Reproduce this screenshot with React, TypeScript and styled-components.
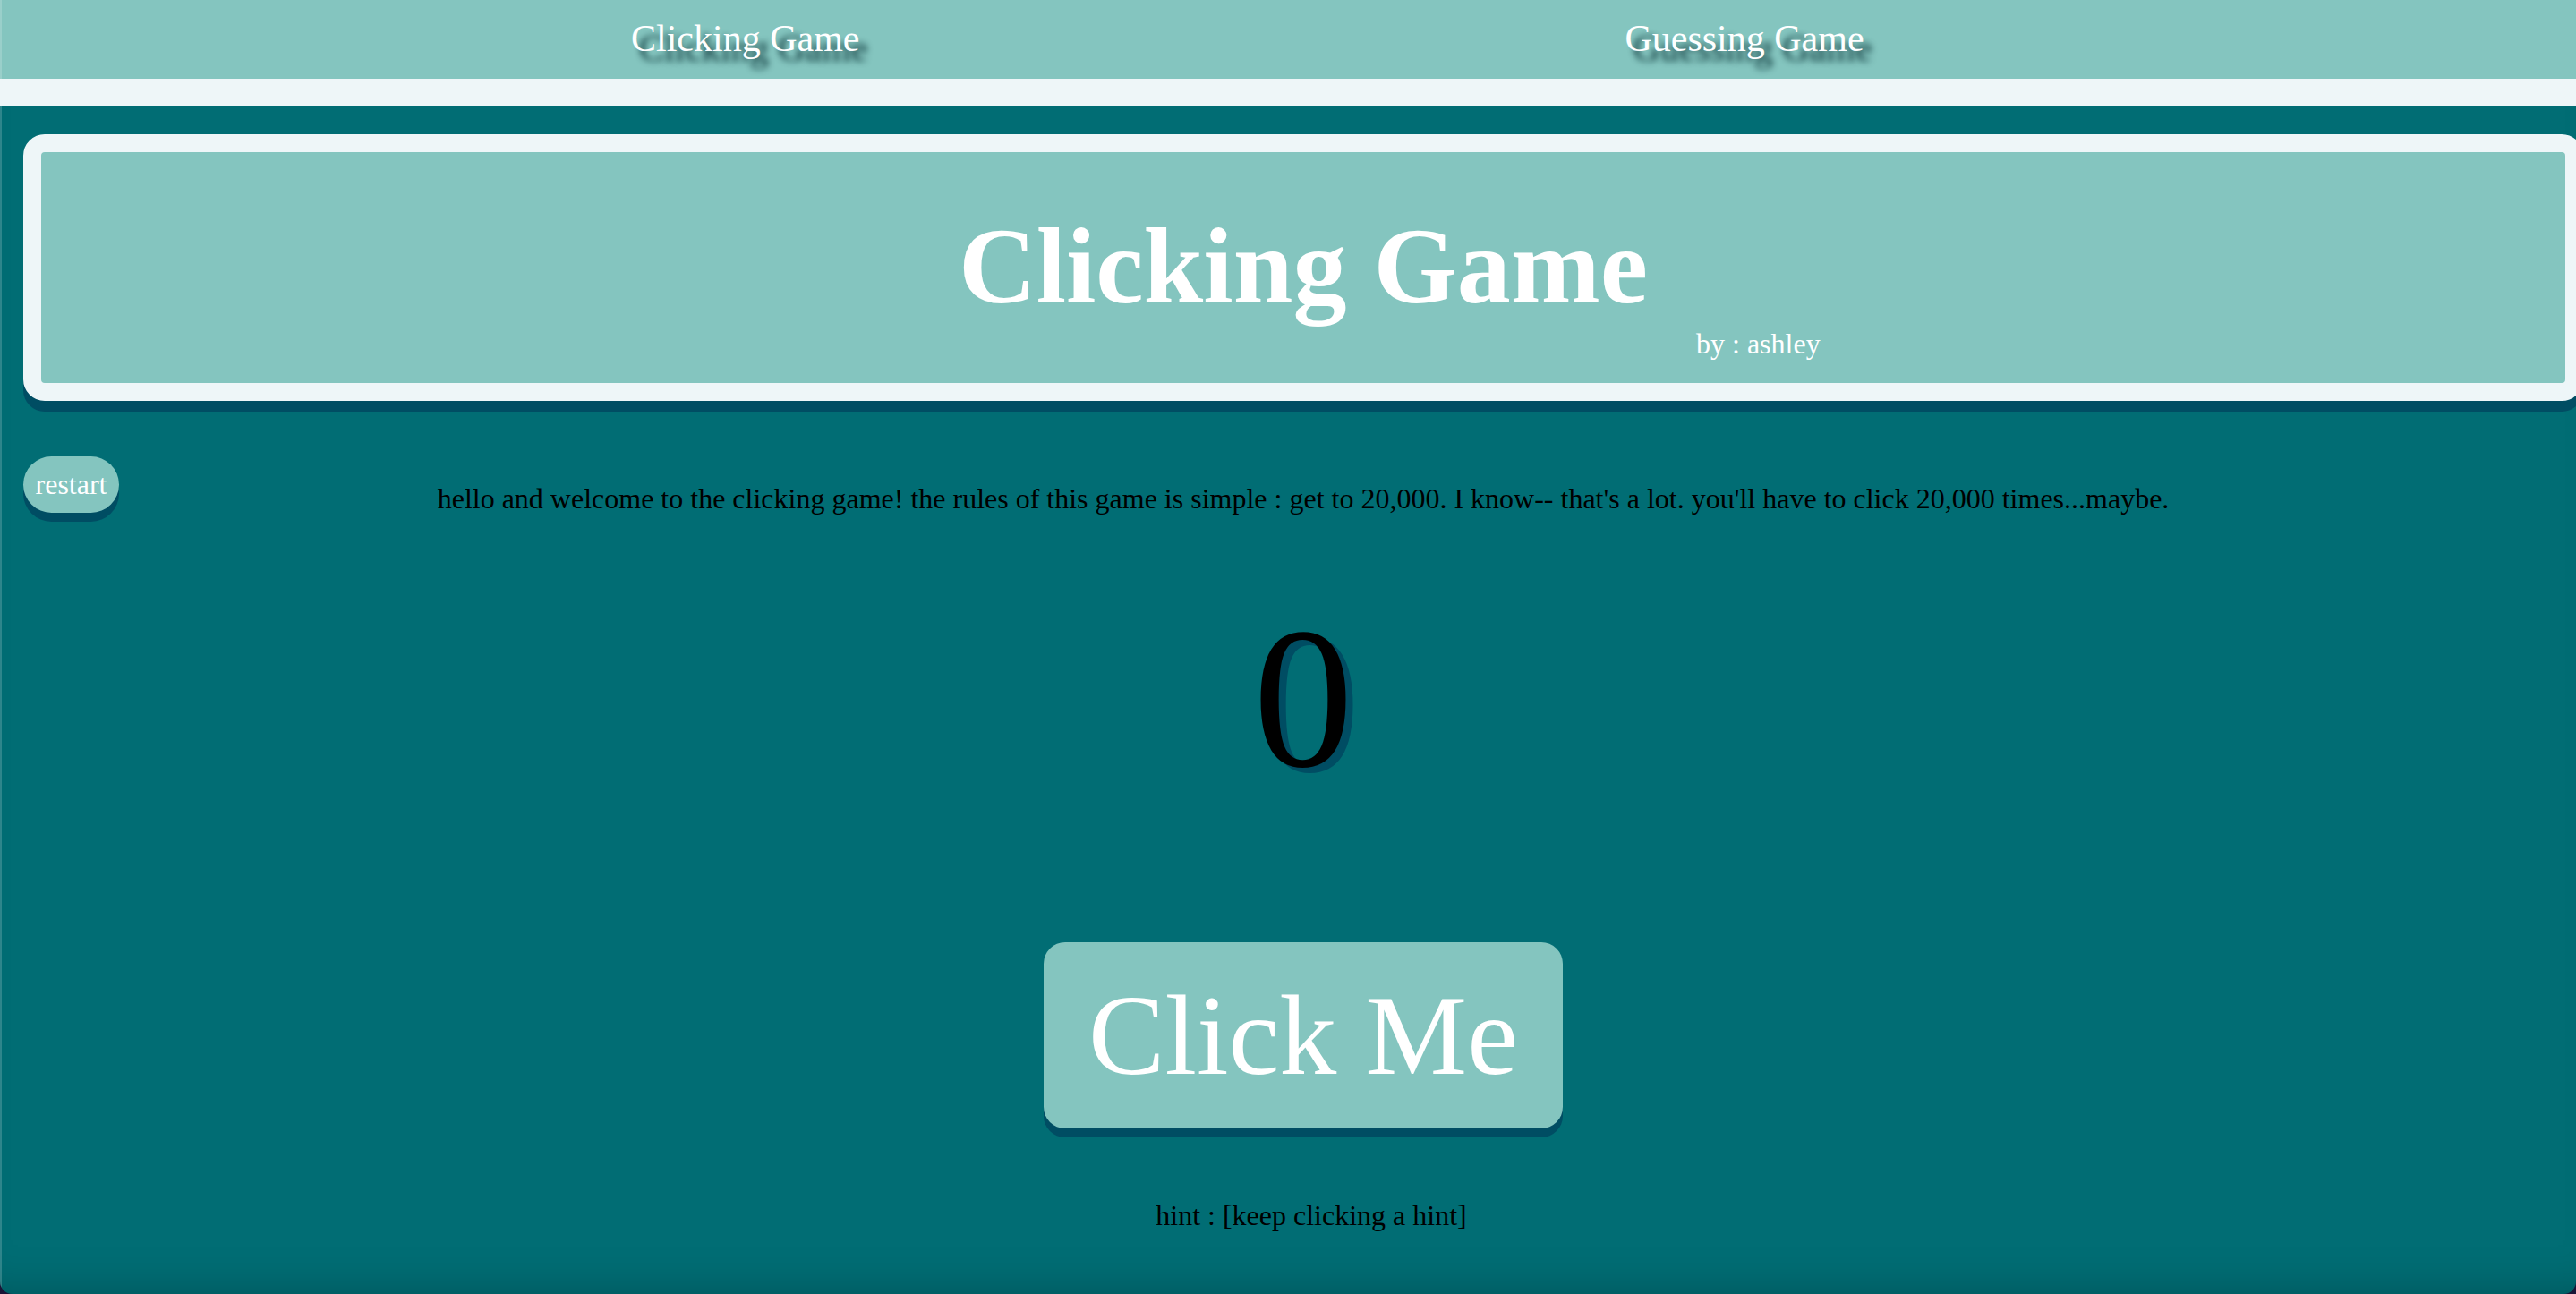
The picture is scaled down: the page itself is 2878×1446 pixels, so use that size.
import React, { useState } from "react";
import styled, { createGlobalStyle } from "styled-components";

const GlobalStyle = createGlobalStyle`
  html, body {
    margin: 0;
    padding: 0;
    background: #1b1537;
    overflow: hidden;
  }
  body {
    font-family: "Liberation Serif", "Times New Roman", serif;
  }
  * { box-sizing: border-box; }
`;

const Frame = styled.div`
  width: 2878px;
  height: 1446px;
  display: flex;
  flex-direction: column;
  border-radius: 0 0 14px 14px;
  overflow: hidden;
`;

const Nav = styled.nav`
  height: 118px;
  flex: none;
  display: flex;
  align-items: center;
  gap: 855px;
  padding: 0 0 3px 705px;
  background: #84c5bf;
  border-bottom: 30px solid #eef6f8;
  box-shadow: inset 2px 0 0 rgba(255, 255, 255, 0.18);
`;

const NavLink = styled.a`
  font-size: 42px;
  line-height: 48px;
  color: #ffffff;
  text-decoration: none;
  text-shadow: 9px 11px 7px rgba(5, 45, 50, 0.95);
  cursor: pointer;
`;

const Main = styled.main`
  flex: 1;
  background: #016d74;
  padding-top: 32px;
  overflow: hidden;
  box-shadow: inset 2px 0 0 rgba(255, 255, 255, 0.18),
    inset 0 -40px 50px -40px rgba(0, 0, 0, 0.25);
`;

const Column = styled.div`
  margin-left: 26px;
  margin-right: -8px;
  display: flex;
  flex-direction: column;
  align-items: center;
`;

const HeaderCard = styled.header`
  align-self: stretch;
  background: #84c5bf;
  border: 20px solid #eef6f8;
  border-radius: 24px;
  box-shadow: 0 12px 0 #004d63;
  padding: 68px 0 28px;
  display: flex;
  flex-direction: column;
`;

const Title = styled.h1`
  margin: 0;
  font-size: 120px;
  line-height: 120px;
  font-weight: 700;
  color: #ffffff;
  text-align: center;
`;

const Byline = styled.p`
  margin: 10px 0 0 1849px;
  font-size: 32px;
  line-height: 32px;
  color: #ffffff;
`;

const IntroRow = styled.div`
  align-self: stretch;
  margin-top: 62px;
  display: grid;
  grid-template-columns: 107px 1fr 107px;
  align-items: start;
`;

const PillButton = styled.button`
  width: 107px;
  height: 63px;
  padding: 0;
  border: none;
  border-radius: 32px;
  background: #84c5bf;
  color: #ffffff;
  font-family: "Liberation Serif", "Times New Roman", serif;
  font-size: 32px;
  line-height: 63px;
  box-shadow: 0 10px 0 #004d63;
  cursor: pointer;
`;

const Text = styled.p<{ $top: number; $shift?: number }>`
  margin: ${(p) => p.$top}px 0 0;
  padding-left: ${(p) => p.$shift ?? 0}px;
  font-size: 32px;
  line-height: 37px;
  color: #000000;
  text-align: center;
`;

const Counter = styled.div`
  margin-top: 92px;
  font-size: 224px;
  line-height: 224px;
  color: #000000;
  text-shadow: 8px 6px 0 #004d63;
`;

const BigButton = styled.button`
  margin-top: 161px;
  height: 208px;
  padding: 0 50px;
  border: none;
  border-radius: 24px;
  background: #84c5bf;
  color: #ffffff;
  font-family: "Liberation Serif", "Times New Roman", serif;
  font-size: 128px;
  line-height: 208px;
  box-shadow: 0 10px 0 #004d63;
  cursor: pointer;
`;

export default function App() {
  const [count, setCount] = useState(0);
  return (
    <>
      <GlobalStyle />
      <Frame>
        <Nav>
          <NavLink>Clicking Game</NavLink>
          <NavLink>Guessing Game</NavLink>
        </Nav>
        <Main>
          <Column>
            <HeaderCard>
              <Title>Clicking Game</Title>
              <Byline>by : ashley</Byline>
            </HeaderCard>
            <IntroRow>
              <PillButton onClick={() => setCount(0)}>restart</PillButton>
              <Text $top={29}>
                hello and welcome to the clicking game! the rules of this game is simple : get to 20,000. I know-- that's a lot. you'll have to click 20,000 times...maybe.
              </Text>
              <span />
            </IntroRow>
            <Counter>{count.toLocaleString("en-US")}</Counter>
            <BigButton onClick={() => setCount((c) => c + 1)}>Click Me</BigButton>
            <Text $top={79} $shift={18}>hint : [keep clicking a hint]</Text>
          </Column>
        </Main>
      </Frame>
    </>
  );
}
